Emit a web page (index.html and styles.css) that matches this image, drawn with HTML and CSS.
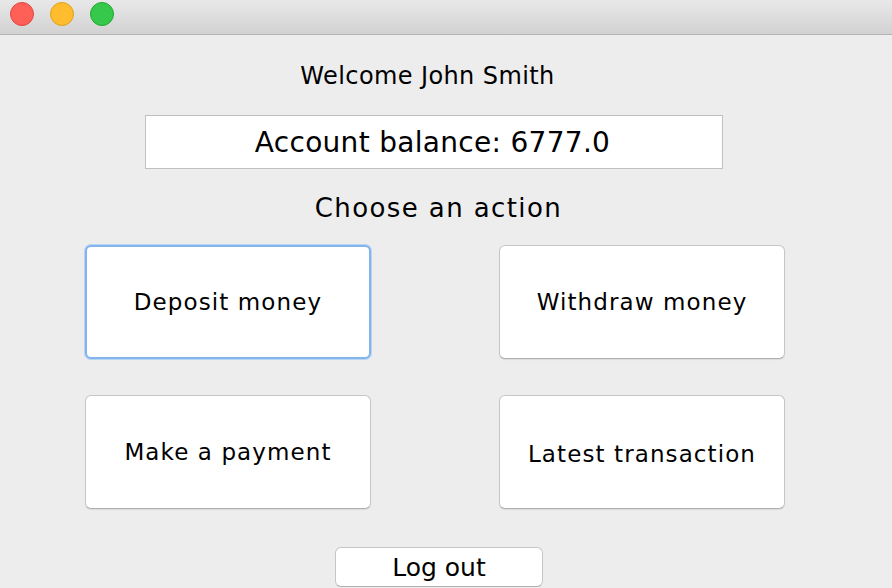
FILE: index.html
```html
<!DOCTYPE html>
<html>
<head>
<meta charset="utf-8">
<link rel="stylesheet" href="styles.css">
</head>
<body>
<div class="window">
  <div class="titlebar">
    <span class="light red"></span>
    <span class="light yellow"></span>
    <span class="light green"></span>
  </div>
  <div class="content">
    <div class="welcome">Welcome John Smith</div>
    <div class="balance">Account balance: 6777.0</div>
    <div class="choose">Choose an action</div>
    <div class="actions">
      <button class="btn focused">Deposit money</button>
      <button class="btn">Withdraw money</button>
      <button class="btn">Make a payment</button>
      <button class="btn low">Latest transaction</button>
    </div>
    <button class="logout">Log out</button>
  </div>
</div>
</body>
</html>
```
FILE: styles.css
```css
html, body {
  margin: 0;
  padding: 0;
  background: #ededed;
  overflow: hidden;
}
.window {
  width: 892px;
  height: 588px;
  font-family: "DejaVu Sans", "Lucida Grande", sans-serif;
  color: #000;
}
.titlebar {
  height: 34px;
  background: linear-gradient(#e8e8e8, #d2d2d2);
  border-bottom: 1px solid #b4b4b4;
  display: flex;
  align-items: center;
  gap: 16px;
  padding-left: 10px;
  box-sizing: content-box;
}
.titlebar .light {
  width: 24px;
  height: 24px;
  border-radius: 50%;
  box-sizing: border-box;
  margin-top: -6px;
}
.red { background: #fe5f57; border: 1px solid #e2463f; }
.yellow { background: #febc2e; border: 1px solid #e1a116; }
.green { background: #35c84a; border: 1px solid #1fa82f; }
.content {
  width: 870px;
  display: flex;
  flex-direction: column;
  align-items: center;
}
.welcome {
  margin-top: 26px;
  height: 30px;
  font-size: 24px;
  line-height: 30px;
  letter-spacing: 0.4px;
  margin-right: 15px;
  white-space: nowrap;
}
.balance {
  margin-top: 24px;
  width: 578px;
  height: 54px;
  box-sizing: border-box;
  background: #fff;
  border: 1px solid #c0c0c0;
  font-size: 28px;
  letter-spacing: 0.3px;
  display: flex;
  align-items: center;
  justify-content: center;
  margin-right: 3px;
  padding-right: 2px;
  padding-top: 1px;
}
.choose {
  margin-top: 22px;
  height: 34px;
  font-size: 26px;
  line-height: 34px;
  letter-spacing: 1.4px;
  margin-left: 7px;
  white-space: nowrap;
}
.actions {
  margin-top: 20px;
  display: grid;
  grid-template-columns: 286px 286px;
  grid-template-rows: 114px 114px;
  column-gap: 128px;
  row-gap: 36px;
}
.btn {
  font-family: inherit;
  font-size: 23px;
  letter-spacing: 1.1px;
  color: #000;
  background: #fff;
  border: 1px solid #c6c6c6;
  border-bottom-color: #b0b0b0;
  border-radius: 6px;
  box-shadow: 0 1px 1px rgba(0,0,0,0.08);
  padding: 0;
  margin: 0;
}
.btn.focused {
  border: 2px solid #83b4ec;
  box-shadow: 0 0 0 1px #b8d4f5;
}
.btn.low {
  padding-top: 4px;
}
.logout {
  margin-top: 38px;
  width: 208px;
  height: 40px;
  font-family: inherit;
  font-size: 25px;
  color: #000;
  background: #fff;
  border: 1px solid #c6c6c6;
  border-bottom-color: #b0b0b0;
  border-radius: 6px;
  padding: 0;
  margin-left: 8px;
}
```
